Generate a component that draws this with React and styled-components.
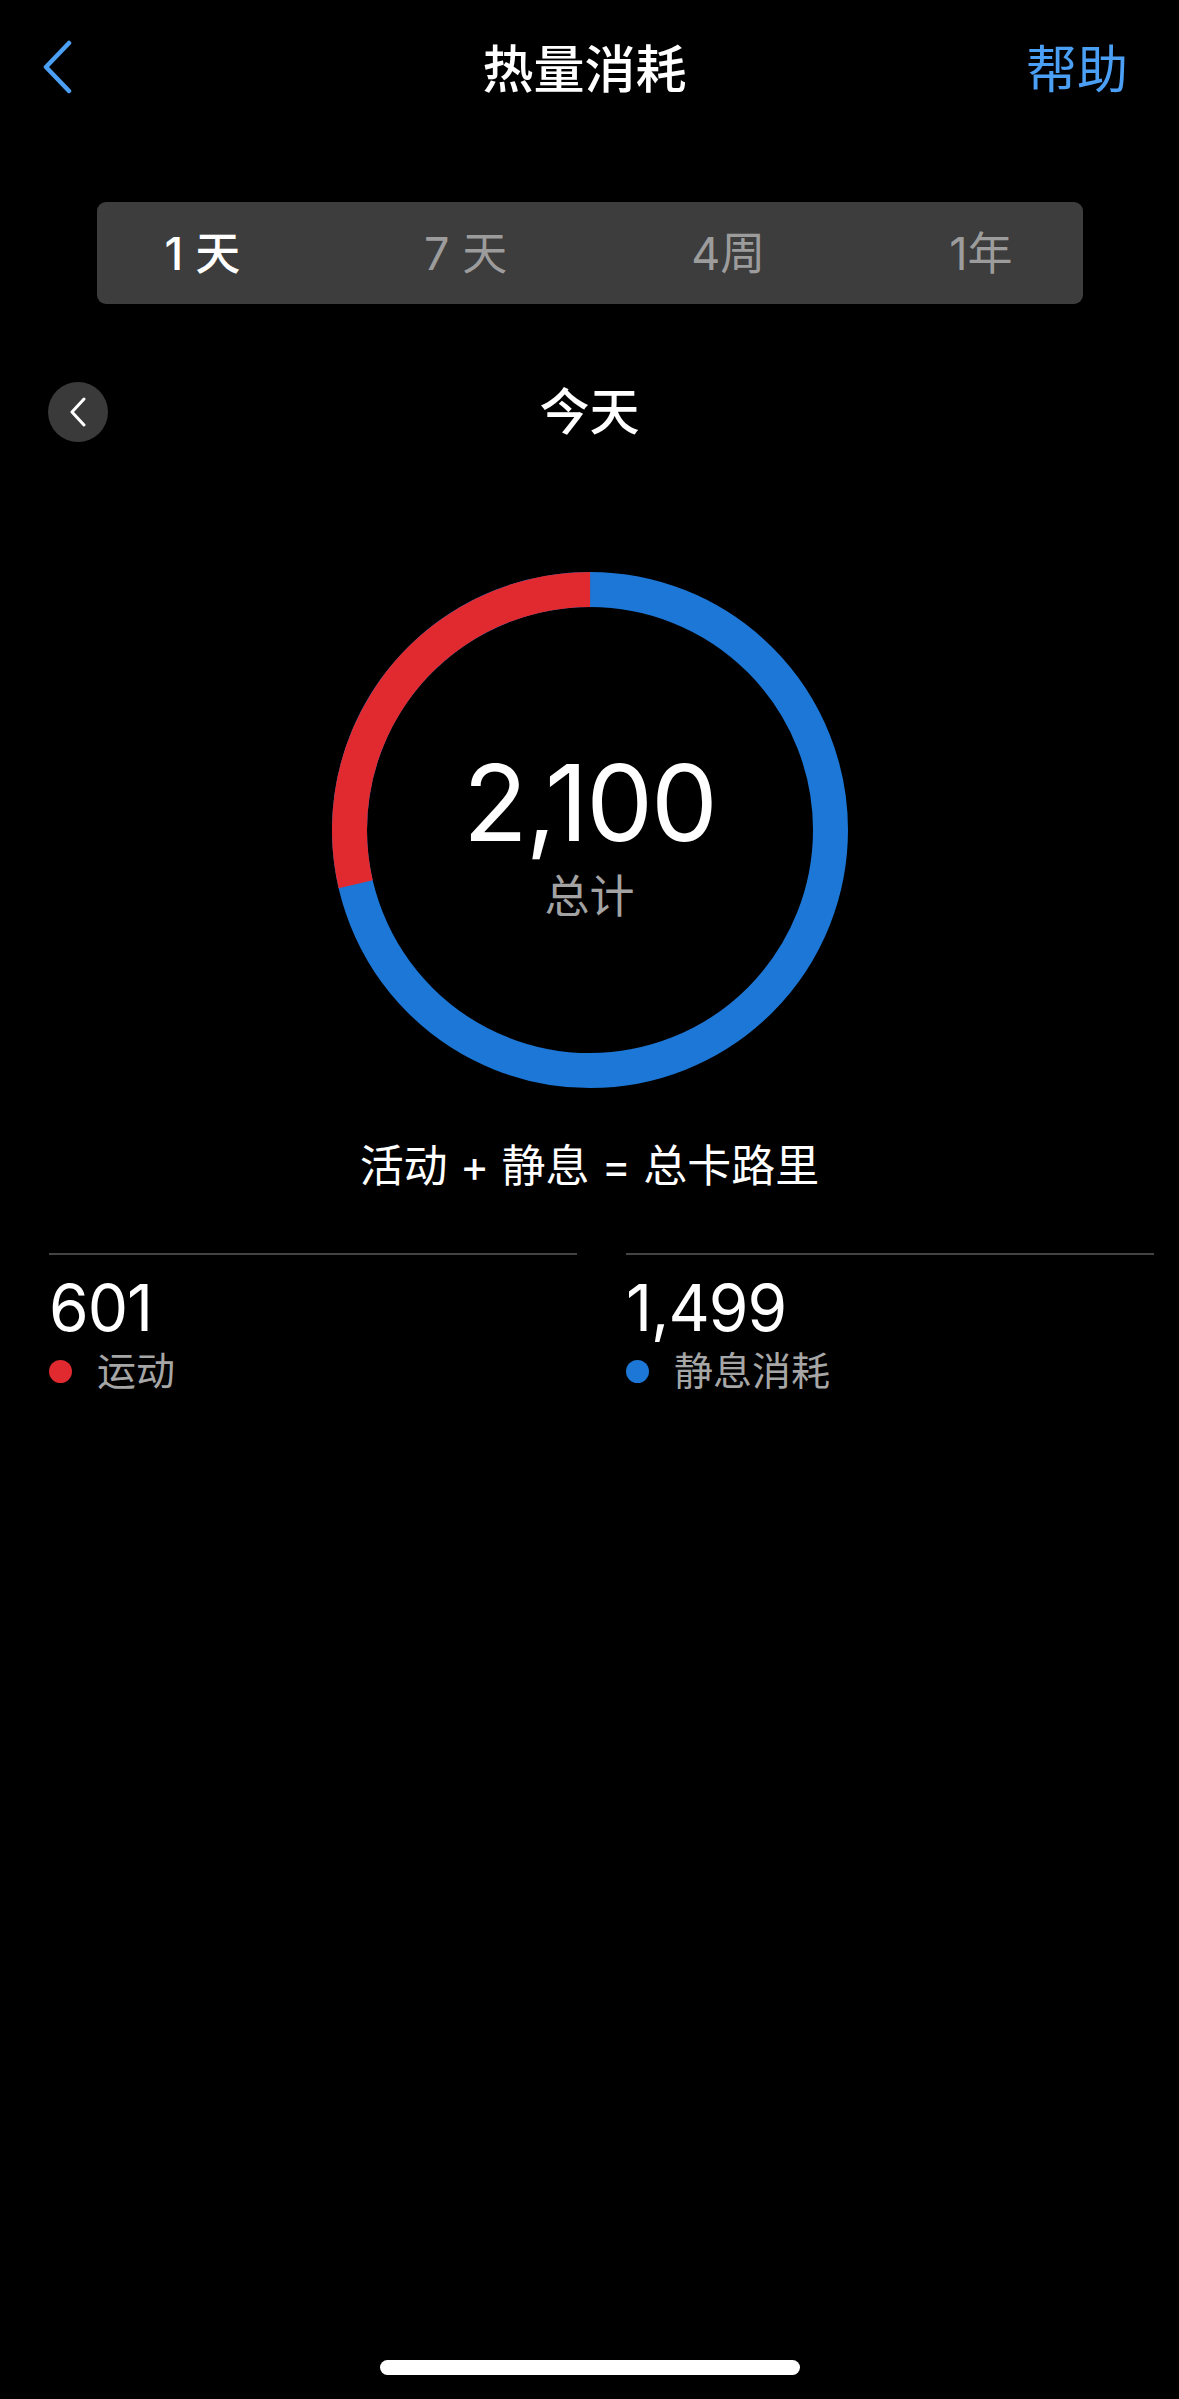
import React, { useState } from 'react';
import styled, { createGlobalStyle } from 'styled-components';

const GlobalStyle = createGlobalStyle`
  html, body { margin: 0; padding: 0; background: #000; }
  body { font-family: Inter, "Noto Sans CJK SC", sans-serif; color: #fff; }
`;

const Page = styled.div`
  width: 1179px; min-height: 2399px; margin: 0 auto; background: #000;
  display: flex; flex-direction: column; align-items: center;
`;

const Header = styled.header`
  width: 100%; height: 140px; box-sizing: border-box; padding: 0 51px 0 41px;
  display: grid; grid-template-columns: 1fr auto 1fr; align-items: center;
`;
const BackButton = styled.button`
  justify-self: start; background: none; border: none; padding: 0; cursor: pointer;
  display: flex; margin-top: -6px;
`;
const Title = styled.h1`
  margin: 0; font-size: 51px; font-weight: 500; line-height: 1.2;
`;
const HelpLink = styled.span`
  justify-self: end; color: #4b9ff4; font-size: 51px; font-weight: 400; line-height: 1.2;
`;

const Segmented = styled.div`
  margin-top: 62px; width: 986px; height: 102px; box-sizing: border-box; padding: 0 70px 0 68px;
  background: #3d3d3d; border-radius: 9px;
  display: flex; justify-content: space-between; align-items: center;
`;
const Segment = styled.span`
  font-size: 45px; line-height: 1; cursor: pointer; white-space: pre;
  color: ${p => (p.$active ? '#fff' : '#9c9c9c')};
  font-weight: ${p => (p.$active ? 500 : 400)};
`;

const DateRow = styled.div`
  margin-top: 78px; width: 100%; height: 60px; box-sizing: border-box; padding: 0 48px;
  display: grid; grid-template-columns: 1fr auto 1fr; align-items: center;
`;
const RoundButton = styled.button`
  justify-self: start; width: 60px; height: 60px; border-radius: 50%; border: none; padding: 0;
  background: #3a3a3a; display: flex; align-items: center; justify-content: center; cursor: pointer;
`;
const DateLabel = styled.div`
  font-size: 50px; font-weight: 500; line-height: 1.2;
`;

const RingWrap = styled.div`
  position: relative; margin-top: 130px; width: 516px; height: 516px;
`;
const RingCenter = styled.div`
  position: absolute; inset: 0; padding-top: 14px;
  display: flex; flex-direction: column; align-items: center; justify-content: center;
`;
const Total = styled.div`
  font-size: 106px; font-weight: 400; line-height: 1; letter-spacing: -2px;
`;
const TotalLabel = styled.div`
  margin-top: 14px; font-size: 45px; color: #a3a3a3; line-height: 1.2;
`;

const Formula = styled.div`
  margin-top: 52px; font-size: 44px; line-height: 1.2;
`;

const Stats = styled.div`
  margin-top: 60px; width: 100%; box-sizing: border-box; padding: 0 25px 0 49px;
  display: grid; grid-template-columns: 1fr 1fr; column-gap: 49px;
`;
const Stat = styled.div`
  border-top: 2px solid #444; padding-top: 21px;
`;
const StatValue = styled.div`
  font-size: 64px; line-height: 1; font-weight: 400; letter-spacing: -1px;
`;
const StatLabel = styled.div`
  margin-top: 8px; display: flex; align-items: center; gap: 25px;
  font-size: 39px; line-height: 1.2; color: #a6a6a6;
`;
const Dot = styled.span`
  width: 23px; height: 23px; border-radius: 50%; background: ${p => p.$color}; flex: none;
`;

const Spacer = styled.div` flex: 1; `;
const HomeIndicator = styled.div`
  width: 420px; height: 15px; border-radius: 8px; background: #fff; margin-bottom: 24px;
`;

const RED = '#e02a30';
const BLUE = '#1c77d6';

const Ring = ({ active, rest }) => {
    const size = 516;
    const stroke = 35;
    const r = (size - stroke) / 2;
    const c = 2 * Math.PI * r;
    const frac = active / (active + rest);
    const start = -90 - frac * 360;
    return (
        <svg width={size} height={size} viewBox={`0 0 ${size} ${size}`}>
            <circle cx={size / 2} cy={size / 2} r={r} fill="none" stroke={BLUE} strokeWidth={stroke} />
            <circle cx={size / 2} cy={size / 2} r={r} fill="none" stroke={RED} strokeWidth={stroke}
                strokeDasharray={`${frac * c} ${c}`} transform={`rotate(${start} ${size / 2} ${size / 2})`} />
        </svg>
    );
};

const tabs = ['1 天', '7 天', '4周', '1年'];

const App = () => {
    const [tab, setTab] = useState(0);
    const active = 601;
    const rest = 1499;

    return (
        <Page>
            <GlobalStyle />
            <Header>
                <BackButton>
                    <svg width="32" height="54" viewBox="0 0 32 54">
                        <path d="M28 3 L5 27 L28 51" fill="none" stroke="#4b9ff4" strokeWidth="4.5" strokeLinecap="round" strokeLinejoin="round" />
                    </svg>
                </BackButton>
                <Title>热量消耗</Title>
                <HelpLink>帮助</HelpLink>
            </Header>

            <Segmented>
                {tabs.map((t, i) => (
                    <Segment key={t} $active={i === tab} onClick={() => setTab(i)}>{t}</Segment>
                ))}
            </Segmented>

            <DateRow>
                <RoundButton>
                    <svg width="18" height="30" viewBox="0 0 18 30">
                        <path d="M15 2 L3 15 L15 28" fill="none" stroke="#fff" strokeWidth="3" strokeLinecap="round" strokeLinejoin="round" />
                    </svg>
                </RoundButton>
                <DateLabel>今天</DateLabel>
            </DateRow>

            <RingWrap>
                <Ring active={active} rest={rest} />
                <RingCenter>
                    <Total>2,100</Total>
                    <TotalLabel>总计</TotalLabel>
                </RingCenter>
            </RingWrap>

            <Formula>活动 + 静息 = 总卡路里</Formula>

            <Stats>
                <Stat>
                    <StatValue>601</StatValue>
                    <StatLabel><Dot $color={RED} />运动</StatLabel>
                </Stat>
                <Stat>
                    <StatValue>1,499</StatValue>
                    <StatLabel><Dot $color={BLUE} />静息消耗</StatLabel>
                </Stat>
            </Stats>

            <Spacer />
            <HomeIndicator />
        </Page>
    );
};

export default App;
